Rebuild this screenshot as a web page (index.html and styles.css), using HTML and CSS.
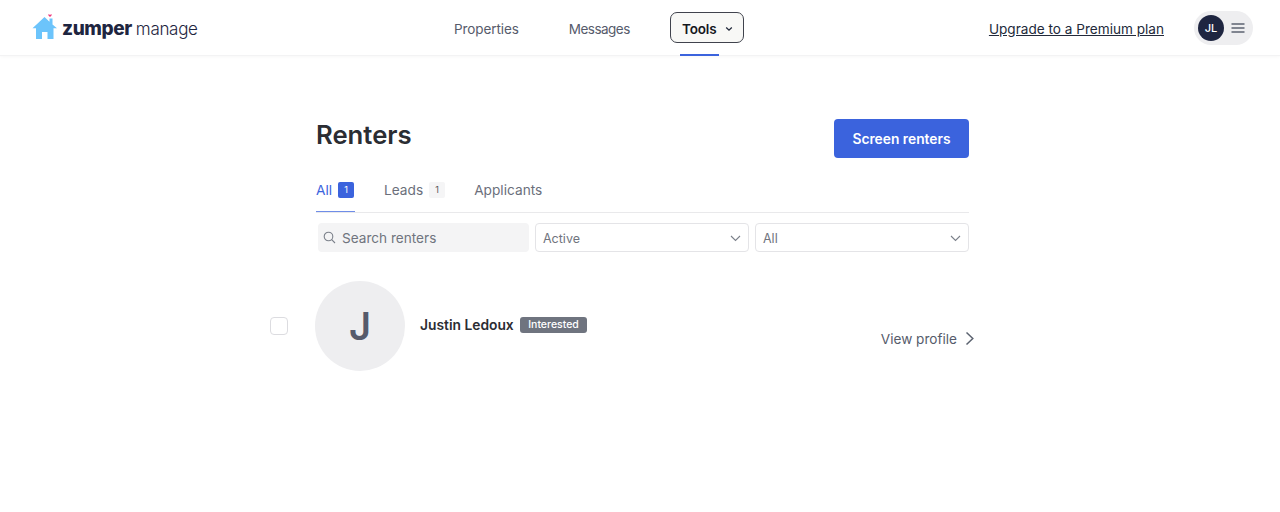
FILE: index.html
```html
<!DOCTYPE html>
<html lang="en">
<head>
    <meta charset="UTF-8">
    <title>Renters</title>
    <link rel="stylesheet" href="styles.css">
</head>
<body>
    <div class="navbar">
        <div class="logo">
            <svg class="logo-house" width="26" height="26" viewBox="0 0 26 26">
                <path d="M0.500 14.200 L12.500 3 L17.500 7.700 L17.500 4.500 L20.500 4.500 L20.500 10.500 L25 14.200 L21.500 14.200 L21.500 25 L15.500 25 L15.500 18 L10 18 L10 25 L4 25 L4 14.200 Z" fill="#6cc4fb"/>
                <path d="M17.300 0.500 C16.500 -0.300 15.300 0.700 18 3 C20.700 0.700 19.500 -0.300 18.700 0.500 L18 1 Z" fill="#f0377b"/>
            </svg>
            <span class="logo-main">zumper</span>
            <span class="logo-sub">manage</span>
        </div>
        <div class="nav-links">
            <a href="#">Properties</a>
            <a href="#" class="nav-messages">Messages</a>
            <div class="nav-active">
                <a href="#" class="tools-btn">Tools
                    <svg width="8" height="6" viewBox="0 0 8 6"><path d="M1.200 1.500 L4 4.200 L6.800 1.500" fill="none" stroke="#22293a" stroke-width="1.300"/></svg>
                </a>
            </div>
        </div>
        <div class="nav-right">
            <a href="#" class="upgrade">Upgrade to a Premium plan</a>
            <div class="user-pill">
                <span class="user-avatar">JL</span>
                <svg width="14" height="10" viewBox="0 0 14 10"><path d="M0.500 1 H13.500 M0.500 5 H13.500 M0.500 9 H13.500" stroke="#5c6370" stroke-width="1.400"/></svg>
            </div>
        </div>
    </div>

    <div class="container">
        <div class="title-row">
            <h2>Renters</h2>
            <button class="primary-btn">Screen renters</button>
        </div>

        <div class="tabs">
            <a href="#" class="tab active">All <span class="count">1</span></a>
            <a href="#" class="tab">Leads <span class="count">1</span></a>
            <a href="#" class="tab">Applicants</a>
        </div>

        <div class="filters">
            <div class="search">
                <svg width="13" height="13" viewBox="0 0 13 13"><circle cx="5.500" cy="5.500" r="4.300" fill="none" stroke="#7b808a" stroke-width="1.100"/><path d="M8.700 8.700 L12 12" stroke="#7b808a" stroke-width="1.100"/></svg>
                <span>Search renters</span>
            </div>
            <div class="select">
                <span>Active</span>
                <svg width="11" height="7" viewBox="0 0 11 7"><path d="M1 1 L5.500 5.500 L10 1" fill="none" stroke="#7b808a" stroke-width="1.100"/></svg>
            </div>
            <div class="select">
                <span>All</span>
                <svg width="11" height="7" viewBox="0 0 11 7"><path d="M1 1 L5.500 5.500 L10 1" fill="none" stroke="#7b808a" stroke-width="1.100"/></svg>
            </div>
        </div>

        <div class="renter">
            <span class="checkbox"></span>
            <div class="avatar">J</div>
            <div class="renter-name">
                <span class="name">Justin Ledoux</span>
                <span class="status">Interested</span>
            </div>
            <a href="#" class="view-profile">View profile
                <svg width="10" height="15" viewBox="0 0 10 15"><path d="M1.500 1.500 L7.800 7.500 L1.500 13.500" fill="none" stroke="#5c6370" stroke-width="1.500"/></svg>
            </a>
        </div>
    </div>
</body>
</html>
```

FILE: styles.css
```css
body {
    font-family: 'Inter', sans-serif;
    margin: 0;
    background-color: #fff;
    color: #2b2d33;
}
a {
    text-decoration: none;
}
.navbar {
    height: 56px;
    box-sizing: border-box;
    display: flex;
    align-items: center;
    padding: 0 27px 0 32px;
    border-bottom: 1px solid #f3f3f4;
    box-shadow: 0 1px 3px rgba(0, 0, 0, 0.03);
}
.logo {
    display: flex;
    align-items: center;
    width: 422px;
}
.logo-house {
    margin-right: 4px;
    margin-top: -2px;
}
.logo-main {
    padding-top: 2px;
    font-size: 19px;
    font-weight: 800;
    letter-spacing: -0.4px;
    color: #1e2540;
    margin-right: 4px;
}
.logo-sub {
    padding-top: 2px;
    font-size: 17px;
    font-weight: 300;
    letter-spacing: -0.3px;
    color: #1e2540;
}
.nav-links {
    display: flex;
    align-items: center;
    gap: 50px;
}
.nav-links a {
    padding-top: 2px;
    color: #565b6b;
    font-size: 13.500px;
    letter-spacing: -0.1px;
}
.nav-links .nav-messages {
    letter-spacing: -0.5px;
}
.nav-active {
    height: 56px;
    display: flex;
    align-items: center;
    position: relative;
    margin-left: -10px;
}
.nav-active::after {
    content: "";
    position: absolute;
    left: 10px;
    right: 25px;
    bottom: 0;
    height: 2px;
    background-color: #3b63dd;
}
.nav-links .tools-btn {
    display: flex;
    align-items: center;
    justify-content: space-between;
    width: 74px;
    height: 31px;
    box-sizing: border-box;
    padding: 2px 10px 0 11px;
    border: 1px solid #40434d;
    border-radius: 7px;
    background-color: #f8f8f6;
    color: #15171d;
    font-weight: 600;
}
.nav-right {
    margin-left: auto;
    display: flex;
    align-items: center;
    gap: 30px;
}
.upgrade {
    padding-top: 2px;
    color: #22293a;
    font-size: 13.600px;
    text-decoration: underline;
}
.user-pill {
    width: 59px;
    height: 34px;
    box-sizing: border-box;
    padding: 0 8px 0 4px;
    display: flex;
    align-items: center;
    justify-content: space-between;
    border-radius: 17px;
    background-color: #eeeef0;
}
.user-avatar {
    width: 26px;
    height: 26px;
    border-radius: 50%;
    background-color: #1e2540;
    color: #fff;
    font-size: 11px;
    font-weight: 500;
    display: flex;
    align-items: center;
    justify-content: center;
}
.container {
    width: 653px;
    margin-left: 316px;
    padding-top: 62px;
}
.title-row {
    display: flex;
    justify-content: space-between;
    align-items: flex-start;
    height: 40px;
}
.title-row h2 {
    margin: 0;
    font-size: 25.700px;
    font-weight: 600;
    line-height: 34px;
    color: #2b2d33;
}
.primary-btn {
    width: 135px;
    height: 39px;
    margin-top: 1px;
    border: none;
    border-radius: 4px;
    background-color: #3b63dd;
    color: white;
    font-family: inherit;
    font-size: 13.800px;
    font-weight: 600;
}
.tabs {
    display: flex;
    gap: 29px;
    margin-top: 20px;
    height: 34px;
    border-bottom: 1px solid #e9e9eb;
}
.tab {
    display: flex;
    align-items: flex-start;
    gap: 6px;
    height: 34px;
    box-sizing: border-box;
    color: #6b6f7b;
    font-size: 13.700px;
    line-height: 25px;
}
.tab.active {
    width: 39px;
    color: #3b63dd;
    border-bottom: 1px solid #6f8de8;
}
.count {
    width: 16px;
    height: 16px;
    margin-top: 4px;
    border-radius: 2px;
    background-color: #f5f5f6;
    color: #555;
    font-size: 9px;
    line-height: 16px;
    text-align: center;
}
.tab.active .count {
    background-color: #3b63dd;
    color: #fff;
}
.filters {
    display: flex;
    gap: 6px;
    margin-top: 10px;
    padding-left: 2px;
}
.search {
    width: 211px;
    height: 29px;
    box-sizing: border-box;
    padding-left: 5px;
    display: flex;
    align-items: center;
    gap: 6px;
    border-radius: 4px;
    background-color: #f4f4f5;
    color: #70747e;
    font-size: 13.600px;
}
.select {
    flex: 1;
    height: 29px;
    box-sizing: border-box;
    padding: 1px 7px 0;
    display: flex;
    align-items: center;
    justify-content: space-between;
    border: 1px solid #e4e4e7;
    border-radius: 4px;
    color: #70747e;
    font-size: 12.500px;
}
.renter {
    display: flex;
    align-items: center;
    height: 90px;
    margin: 29px -6px 0 -46px;
}
.checkbox {
    width: 16px;
    height: 16px;
    border: 1px solid #dcdce0;
    border-radius: 4px;
    margin-right: 27px;
}
.avatar {
    width: 90px;
    height: 90px;
    border-radius: 50%;
    background-color: #eeeef0;
    color: #565b6b;
    font-size: 38px;
    font-weight: 600;
    display: flex;
    align-items: center;
    justify-content: center;
}
.renter-name {
    display: flex;
    align-items: center;
    gap: 6px;
    margin-left: 15px;
    margin-top: -3px;
    flex: 1;
}
.name {
    font-size: 13.800px;
    font-weight: 600;
    color: #2b2d33;
}
.status {
    height: 16px;
    padding: 0 8.500px;
    border-radius: 3px;
    background-color: #6f747f;
    color: #fff;
    font-size: 10.500px;
    font-weight: 500;
    line-height: 16px;
}
.view-profile {
    display: flex;
    align-items: center;
    gap: 8px;
    margin-top: 25px;
    color: #565b6b;
    font-size: 13.600px;
}
```
